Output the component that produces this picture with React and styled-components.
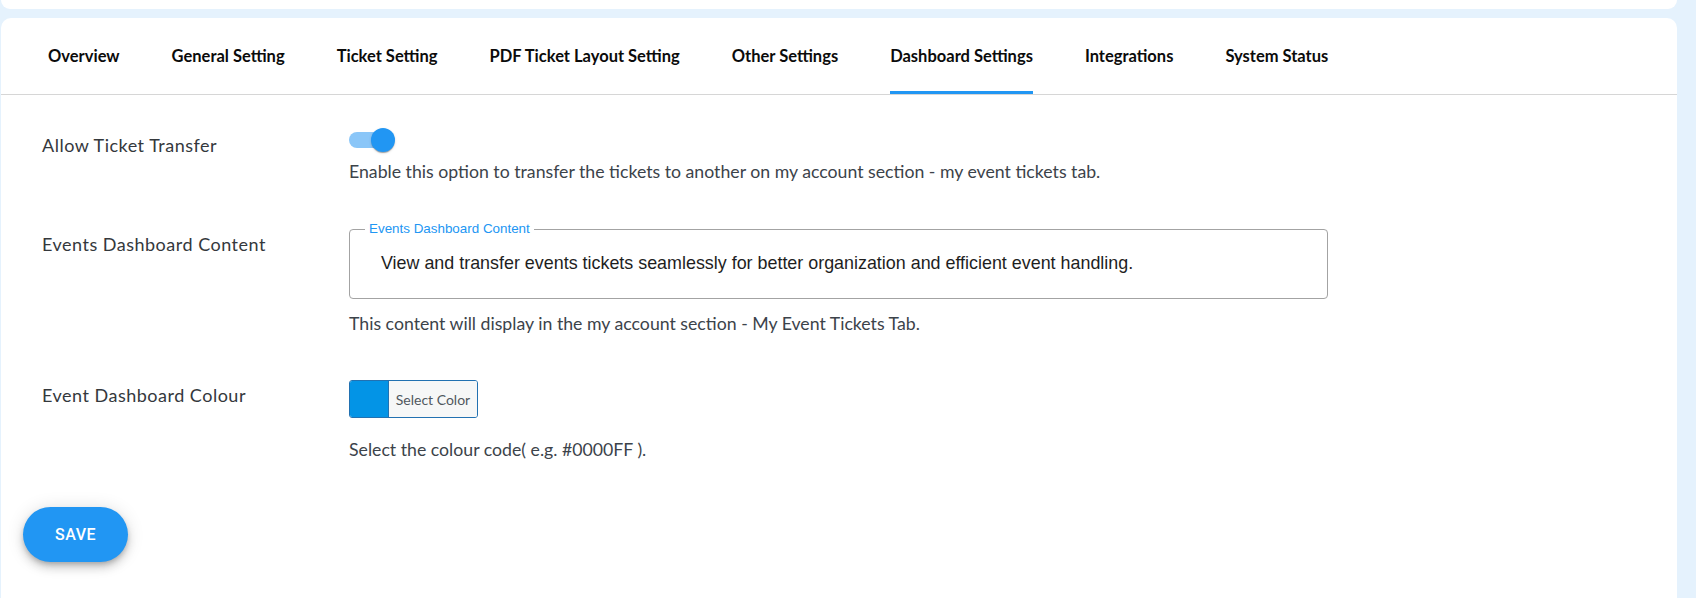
import React from 'react';
import styled, { createGlobalStyle } from 'styled-components';

const GlobalStyle = createGlobalStyle`
  html, body {
    margin: 0;
    padding: 0;
    background: #e5f2fd;
    font-family: Lato, "Noto Sans", sans-serif;
  }
`;

const tabs = [
  'Overview',
  'General Setting',
  'Ticket Setting',
  'PDF Ticket Layout Setting',
  'Other Settings',
  'Dashboard Settings',
  'Integrations',
  'System Status',
];

const App = () => {
  return (
    <Page>
      <GlobalStyle />
      <TopCard />
      <Card>
        <TabBar>
          {tabs.map((t) => (
            <Tab key={t} $active={t === 'Dashboard Settings'}>
              {t}
            </Tab>
          ))}
        </TabBar>

        <Content>
          <Row $top={27}>
            <Label $pad={11}>Allow Ticket Transfer</Label>
            <Control>
              <SwitchBox>
                <Track />
                <Thumb />
              </SwitchBox>
              <Help $top={2}>
                Enable this option to transfer the tickets to another on my account section - my event tickets tab.
              </Help>
            </Control>
          </Row>

          <Row $top={37}>
            <Label $pad={11}>Events Dashboard Content</Label>
            <Control>
              <Fieldset>
                <Legend>Events Dashboard Content</Legend>
                <FieldText>
                  View and transfer events tickets seamlessly for better organization and efficient event handling.
                </FieldText>
              </Fieldset>
              <Help $top={13}>This content will display in the my account section - My Event Tickets Tab.</Help>
            </Control>
          </Row>

          <Row $top={44}>
            <Label $pad={3}>Event Dashboard Colour</Label>
            <Control>
              <ColorButton>
                <Swatch />
                <ColorText>Select Color</ColorText>
              </ColorButton>
              <Help $top={20}>Select the colour code( e.g. #0000FF ).</Help>
            </Control>
          </Row>

          <SaveButton>Save</SaveButton>
        </Content>
      </Card>
    </Page>
  );
};

const Page = styled.div`
  width: 1677px;
  min-height: 598px;
  padding-left: 1px;
  box-sizing: border-box;
`;

const TopCard = styled.div`
  height: 9px;
  background: #ffffff;
  border-radius: 0 0 10px 10px;
`;

const Card = styled.div`
  margin-top: 9px;
  background: #ffffff;
  border-radius: 10px 10px 0 0;
  min-height: 580px;
`;

const TabBar = styled.div`
  display: flex;
  padding-left: 21px;
  border-bottom: 1px solid #d6d6d6;
`;

const Tab = styled.div`
  height: 76px;
  padding: 0 26px;
  display: flex;
  align-items: center;
  position: relative;
  font-family: Lato, sans-serif;
  font-weight: 700;
  font-size: 16.5px;
  color: #0b0b0b;
  &::after {
    content: '';
    display: ${(p) => (p.$active ? 'block' : 'none')};
    position: absolute;
    left: 26px;
    right: 26px;
    bottom: 0;
    height: 3px;
    background: #2196f3;
  }
`;

const Content = styled.div`
  padding-left: 41px;
  padding-bottom: 40px;
`;

const Row = styled.div`
  display: grid;
  grid-template-columns: 307px 1fr;
  margin-top: ${(p) => p.$top}px;
`;

const Label = styled.div`
  padding-top: ${(p) => p.$pad}px;
  font-size: 18px;
  line-height: 24px;
  color: #34383c;
  letter-spacing: 0.5px;
`;

const Control = styled.div`
  display: flex;
  flex-direction: column;
  align-items: flex-start;
`;

const SwitchBox = styled.div`
  position: relative;
  width: 48px;
  height: 36px;
`;

const Track = styled.div`
  position: absolute;
  left: 0;
  top: 10px;
  width: 40px;
  height: 16px;
  border-radius: 8px;
  background: #8ac6f8;
`;

const Thumb = styled.div`
  position: absolute;
  left: 22px;
  top: 6px;
  width: 24px;
  height: 24px;
  border-radius: 50%;
  background: #2196f3;
  box-shadow: 0 2px 1px -1px rgba(0, 0, 0, 0.2), 0 1px 1px 0 rgba(0, 0, 0, 0.14),
    0 1px 3px 0 rgba(0, 0, 0, 0.12);
`;

const Help = styled.div`
  margin-top: ${(p) => p.$top}px;
  font-size: 17.7px;
  line-height: 24px;
  color: #3c434a;
`;

const Fieldset = styled.fieldset`
  width: 979px;
  box-sizing: border-box;
  margin: 0;
  padding: 0 31px 25px;
  border: 1px solid #a3a3a3;
  border-radius: 4px;
`;

const Legend = styled.legend`
  margin-left: -16px;
  padding: 0 4px;
  font-family: "Liberation Sans", Arial, sans-serif;
  font-size: 13.4px;
  line-height: 16px;
  color: #2196f3;
`;

const FieldText = styled.div`
  padding-top: 16px;
  font-family: "Liberation Sans", Arial, sans-serif;
  font-size: 17.9px;
  line-height: 20px;
  color: #1e1e1e;
`;

const ColorButton = styled.div`
  display: flex;
  width: 129px;
  height: 38px;
  box-sizing: border-box;
  border: 1px solid #2271b1;
  border-radius: 3px;
  overflow: hidden;
`;

const Swatch = styled.div`
  width: 38px;
  background: #0394e6;
  border-right: 1px solid #2271b1;
`;

const ColorText = styled.div`
  flex: 1;
  display: flex;
  align-items: center;
  justify-content: center;
  background: #f6f7f7;
  font-size: 14px;
  color: #50575e;
`;

const SaveButton = styled.button`
  margin-top: 45px;
  margin-left: -19px;
  width: 105px;
  height: 55px;
  border: none;
  border-radius: 28px;
  background: #2196f3;
  color: #ffffff;
  font-family: Roboto, sans-serif;
  font-weight: 500;
  font-size: 16px;
  letter-spacing: 0.5px;
  text-transform: uppercase;
  cursor: pointer;
  box-shadow: 0 3px 5px -1px rgba(0, 0, 0, 0.2), 0 6px 10px 0 rgba(0, 0, 0, 0.14),
    0 1px 18px 0 rgba(0, 0, 0, 0.12);
`;

export default App;
